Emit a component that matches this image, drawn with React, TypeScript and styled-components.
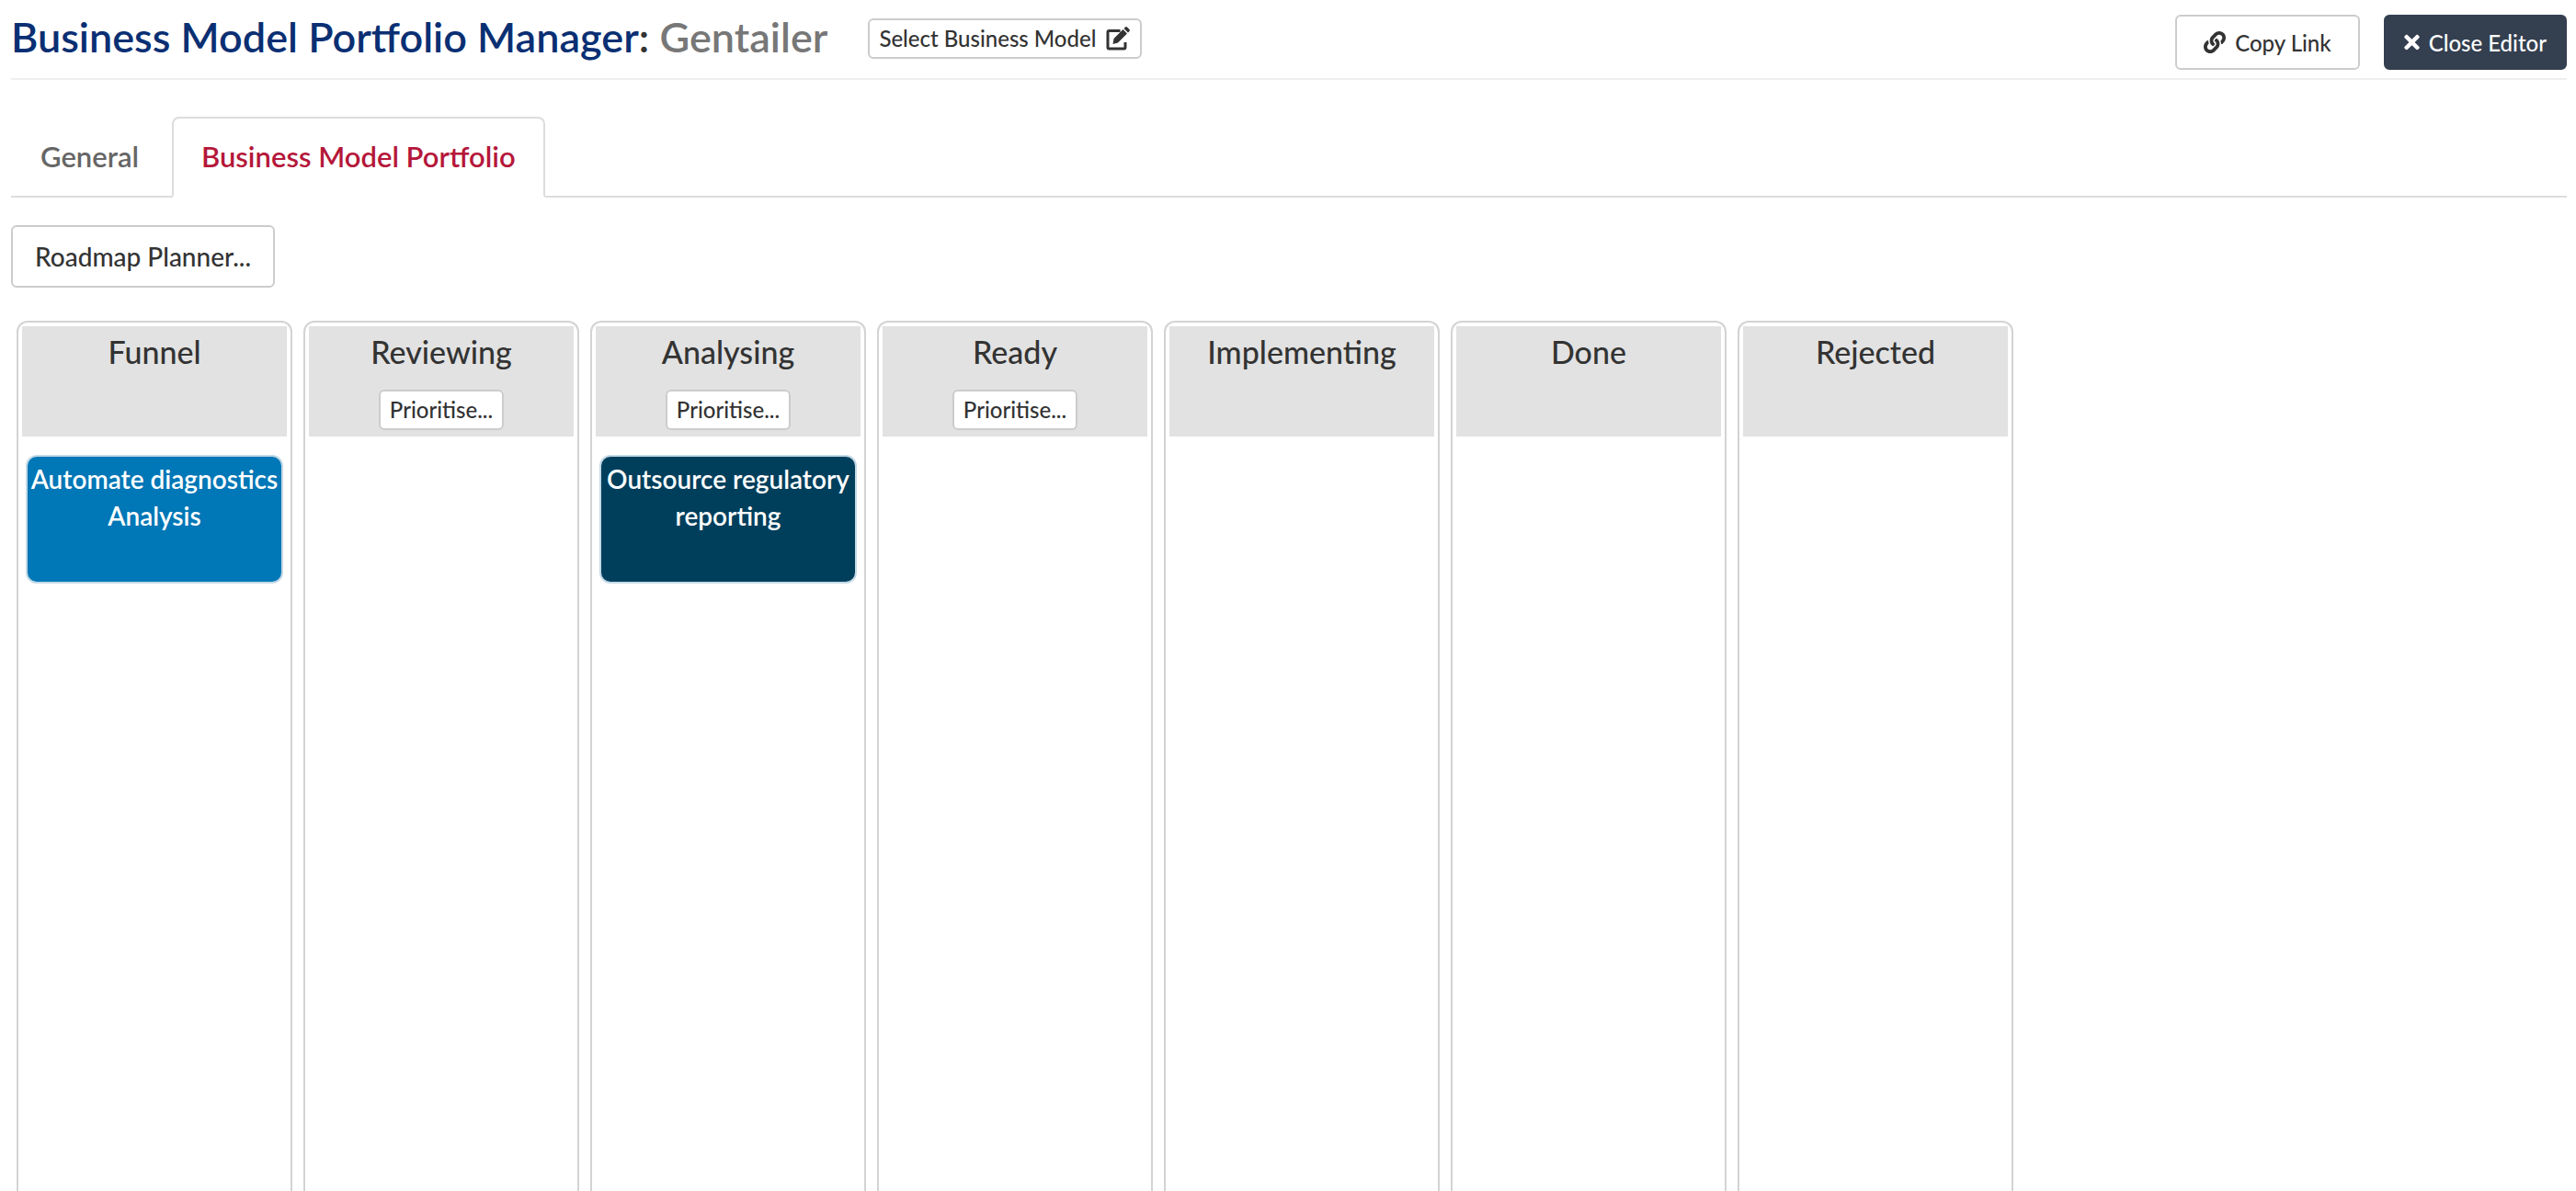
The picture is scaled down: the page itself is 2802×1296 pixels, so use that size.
import React from "react";
import styled, { createGlobalStyle, css } from "styled-components";
import { FaLink, FaTimes } from "react-icons/fa";

const GlobalStyle = createGlobalStyle`
  *, *::before, *::after { box-sizing: border-box; }
  html, body, #root { height: 100%; }
  body {
    margin: 0;
    overflow: hidden;
    background: #fff;
    color: #333;
    font-family: Lato, "Liberation Sans", sans-serif;
    font-size: 28px;
    line-height: 40px;
  }
`;

const Page = styled.div`
  display: flex;
  flex-direction: column;
  height: 100vh;
  padding: 0 10px 0 12px;
`;

const Header = styled.header`
  display: flex;
  align-items: flex-start;
  height: 87px;
  flex: none;
  padding-top: 16px;
  border-bottom: 2px solid #eee;
`;

const Title = styled.h1`
  margin: 0 44px 0 0;
  font-size: 45px;
  line-height: 48px;
  font-weight: 600;
  white-space: nowrap;
`;

const Product = styled.span`
  color: #0a2f73;
`;

const ModelName = styled.span`
  color: #777;
`;

const Actions = styled.div`
  display: flex;
  gap: 26px;
  margin-left: auto;
`;

type ButtonSize = "small" | "compact" | "medium" | "large";

const buttonSizes = {
  small: css`
    height: 44px;
    padding: 0 10px 1px;
    font-size: 24px;
  `,
  compact: css`
    height: 60px;
    padding: 0 20px;
    font-size: 24px;
  `,
  medium: css`
    height: 60px;
    padding: 0 29px;
    font-size: 24px;
  `,
  large: css`
    height: 68px;
    padding: 0 24px;
    font-size: 28px;
  `,
};

const Button = styled.button<{ $size: ButtonSize; $dark?: boolean }>`
  display: inline-flex;
  align-items: center;
  justify-content: center;
  gap: 10px;
  flex: none;
  border: 2px solid ${(p) => (p.$dark ? "#343f50" : "#ccc")};
  border-radius: 6px;
  background: ${(p) => (p.$dark ? "#343f50" : "#fff")};
  color: ${(p) => (p.$dark ? "#fff" : "#333")};
  font-family: inherit;
  font-weight: 500;
  white-space: nowrap;
  cursor: pointer;
  ${(p) => buttonSizes[p.$size]}
`;

const CloseIcon = styled(FaTimes)`
  width: 17px;
`;

const SelectSlot = styled.div`
  display: flex;
  padding-top: 4px;
`;

const Tabs = styled.nav`
  display: flex;
  flex: none;
  gap: 4px;
  margin-top: 40px;
  border-bottom: 2px solid #ddd;
`;

const Tab = styled.button<{ $active?: boolean }>`
  height: 88px;
  margin-bottom: -2px;
  padding: 0 30px 2px;
  border: 2px solid ${(p) => (p.$active ? "#ddd" : "transparent")};
  border-bottom-color: ${(p) => (p.$active ? "#fff" : "transparent")};
  border-radius: 8px 8px 0 0;
  background: ${(p) => (p.$active ? "#fff" : "transparent")};
  color: ${(p) => (p.$active ? "#b5173a" : "#666")};
  font-family: inherit;
  font-size: 31px;
  font-weight: 600;
  cursor: pointer;
`;

const Toolbar = styled.div`
  display: flex;
  flex: none;
  padding: 30px 0 36px;
`;

const Board = styled.main`
  display: flex;
  flex: 1;
  gap: 12px;
  min-height: 0;
  padding-left: 6px;
  overflow: hidden;
`;

const Column = styled.section`
  flex: none;
  width: 300px;
  padding: 4px;
  border: 2px solid #d3d3d3;
  border-bottom: 0;
  border-radius: 12px 12px 0 0;
`;

const ColumnHeader = styled.div`
  display: flex;
  flex-direction: column;
  align-items: center;
  gap: 21px;
  height: 120px;
  padding-top: 8px;
  background: #e2e2e2;
`;

const ColumnTitle = styled.h2`
  margin: 0;
  font-size: 34px;
  line-height: 40px;
  font-weight: 500;
`;

const Card = styled.article<{ $color: string }>`
  height: 140px;
  margin: 20px 4px 0;
  padding-top: 4px;
  border: 2px solid #c3d9e6;
  border-radius: 12px;
  background: ${(p) => p.$color};
  color: #fff;
  font-weight: 600;
  text-align: center;
`;

type ColumnData = {
  title: string;
  prioritise?: boolean;
  cards?: { text: string; color: string }[];
};

const columns: ColumnData[] = [
  { title: "Funnel", cards: [{ text: "Automate diagnostics Analysis", color: "#0077b6" }] },
  { title: "Reviewing", prioritise: true },
  {
    title: "Analysing",
    prioritise: true,
    cards: [{ text: "Outsource regulatory reporting", color: "#003f5c" }],
  },
  { title: "Ready", prioritise: true },
  { title: "Implementing" },
  { title: "Done" },
  { title: "Rejected" },
];

const EditIcon = () => (
  <svg width="28" height="28" viewBox="0 0 28 28" aria-hidden="true">
    <path d="M16.500 5.500H4.500Q3 5.500 3 7V23.500Q3 25 4.500 25H20.500Q22 25 22 23.500V18" fill="none" stroke="currentColor" strokeWidth="3" />
    <path d="M8.500 20l1-6L19.500 4l4.500 4.500L14 18.500zM20.500 3l1.500-1.500q1-1 2 0l2.500 2.500q1 1 0 2L25 7.500z" fill="currentColor" />
  </svg>
);

export default function App() {
  return (
    <>
      <GlobalStyle />
      <Page>
        <Header>
          <Title>
            <Product>Business Model Portfolio Manager</Product>: <ModelName>Gentailer</ModelName>
          </Title>
          <SelectSlot>
            <Button type="button" $size="small">
              Select Business Model <EditIcon />
            </Button>
          </SelectSlot>
          <Actions>
            <Button type="button" $size="medium">
              <FaLink aria-hidden="true" /> Copy Link
            </Button>
            <Button type="button" $size="compact" $dark>
              <CloseIcon aria-hidden="true" /> Close Editor
            </Button>
          </Actions>
        </Header>
        <Tabs>
          <Tab type="button">General</Tab>
          <Tab type="button" $active>
            Business Model Portfolio
          </Tab>
        </Tabs>
        <Toolbar>
          <Button type="button" $size="large">
            Roadmap Planner...
          </Button>
        </Toolbar>
        <Board>
          {columns.map((column) => (
            <Column key={column.title}>
              <ColumnHeader>
                <ColumnTitle>{column.title}</ColumnTitle>
                {column.prioritise && (
                  <Button type="button" $size="small">
                    Prioritise...
                  </Button>
                )}
              </ColumnHeader>
              {column.cards?.map((card) => (
                <Card key={card.text} $color={card.color}>
                  {card.text}
                </Card>
              ))}
            </Column>
          ))}
        </Board>
      </Page>
    </>
  );
}
